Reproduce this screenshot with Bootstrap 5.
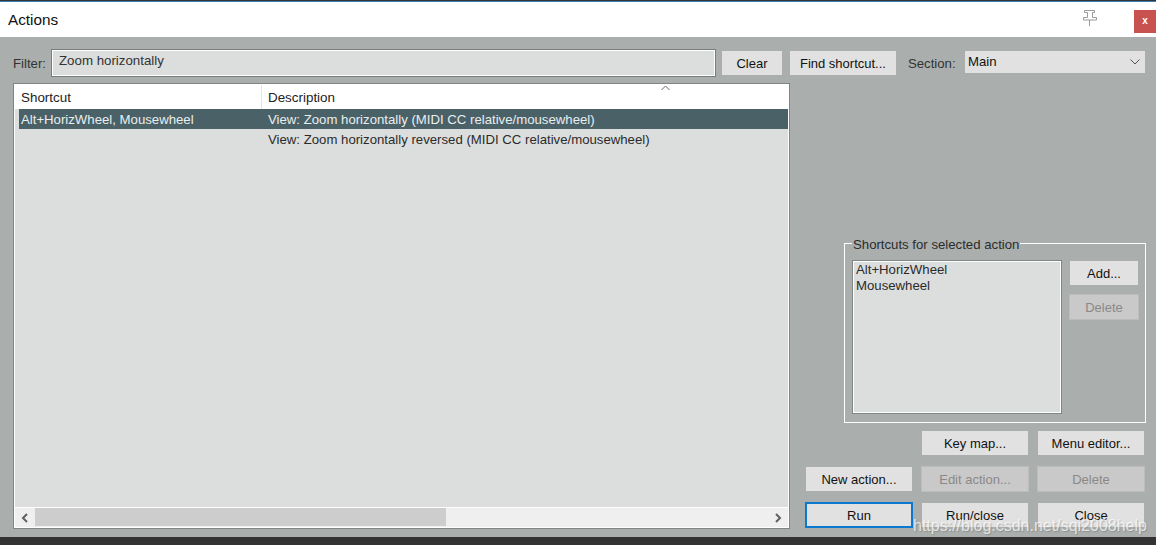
<!doctype html>
<html lang="en"><head><meta charset="utf-8"><title>Actions</title>
<link rel="stylesheet" href="https://cdn.jsdelivr.net/npm/bootstrap@5.3.0/dist/css/bootstrap.min.css">
<style>
html,body{height:100%;}
body{width:1156px;height:545px;overflow:hidden;background:#aaafae;font:13.2px/15px "Liberation Sans",Arial,sans-serif;color:#2b2b2b;position:relative;}
.strip{height:2px;background:linear-gradient(#333 0 1px,#3a80b8 1px);}
.titlebar{height:35px;background:#fff;}
.titletext{font-size:15.3px;line-height:20px;color:#111;padding-left:8px;padding-top:8px;}
.pinicon{width:16px;height:17px;margin:8px 36px 0 0;}
.closebox{width:22px;height:23px;margin-top:8px;background:#c85250;color:#fff;font-weight:700;font-size:10px;line-height:21px;text-align:center;}
.mainarea{height:500px;padding:12px 0 0 13px;}
.bottombar{height:8px;background:#333;}
.filterrow{height:28px;margin-bottom:6px;}
.lbl{color:#333;}
.filterinput.form-control{width:665px;height:28px;margin-left:5px;border:1px solid #777c7d;border-radius:0;box-shadow:inset 0 0 0 1px #fff;background:#dcdedd;font-size:13.3px;line-height:15px;color:#333;padding:3px 7px 8px;}
.wbtn.btn{--bs-btn-border-radius:0;border-radius:0;background:#e1e1e1;border:1px solid #aaafae;color:#111;font-size:13px;line-height:15px;padding:0;height:26px;}
.wbtn.btn:disabled{background:#c9c9c9;border-color:#bcbcbc;color:#8b8888;opacity:1;}
.wbtn.runbtn{border:2px solid #0b78d0;}
.clearb{width:62px;margin-left:5px;}
.findb{width:108px;margin-left:6px;}
.seclbl{margin-left:11px;width:57px;}
.secsel.form-select{width:180px;height:22px;border:0;border-radius:0;background-color:#e1e1e1;font-size:13.2px;line-height:15px;color:#111;padding:0 24px 1px 3px;background-image:url("data:image/svg+xml,%3csvg xmlns='http://www.w3.org/2000/svg' viewBox='0 0 10 6'%3e%3cpath fill='none' stroke='%23555' d='M.5.5 5 5 9.5.5'/%3e%3c/svg%3e");background-position:right 5px center;background-size:10px 6px;margin-top:-3px;}
.listwrap{width:777px;height:446px;border:1px solid #808587;background:#dcdedd;}
.listin{height:100%;border:1px solid #fff;position:relative;}
.listhead{height:24px;background:#fff;color:#222;line-height:25px;font-size:13.4px;}
.cola{width:247px;padding-left:6px;border-right:1px solid #e6e6e6;}
.colb{padding-left:6px;}
.listbody{padding-left:4px;}
.lrow{height:20px;line-height:21px;}
.lrow+.lrow{height:21px;line-height:21px;}
.lrow .cola{width:243px;padding-left:2px;border:0;}
.lrow .colb{padding-left:6px;}
.lsel{background:#4a6168;color:#e9eeee;}
.sortup{position:absolute;left:646px;top:0;width:9px;height:6px;}
.hbar{height:20px;background:#efefef;border-top:1px solid #fff;}
.harrow{width:20px;}
.hthumb{width:411px;background:#cdcdcd;margin-bottom:1px;}
.sidepanel{width:366px;height:446px;padding-bottom:1px;}
.grpbox{width:302px;height:188px;margin:0 0 7px 54px;padding:0 5px 7px 7px;border:1px solid #fff;border-radius:0;min-width:0;}
.grpbox legend{float:none;width:auto;font-size:13.2px;line-height:15px;margin:0;padding:2px 1px 0;color:#2b2b2b;}
.keylist{width:210px;height:154px;flex:none;border:1px solid #808587;box-shadow:inset 0 0 0 1px #fff;background:#dcdedd;padding:1px 3px;line-height:16px;margin-top:8px;}
.addcol{width:70px;flex:none;margin-left:7px;margin-top:8px;}
.addb{width:70px;height:26px;}
.btngrid{display:grid;grid-template-columns:repeat(3,108px);grid-auto-rows:26px;gap:10px 8px;margin-left:15px;}
.wmark{position:absolute;left:913px;top:516px;font-size:16px;line-height:19px;color:rgba(255,255,255,.72);text-shadow:1px 1px 1px rgba(90,90,90,.35);white-space:nowrap;}
</style></head><body>
<div class="strip"></div>
<div class="titlebar d-flex justify-content-between">
  <div class="titletext">Actions</div>
  <div class="d-flex align-items-start">
    <svg class="pinicon" viewBox="0 0 16 17" fill="#fff" stroke="#9a9a9a"><path d="M2.500.5h10v2h-2v5h4v2.500h-13v-2.500h4v-5h-3zM7.500 10v6"/></svg>
    <div class="closebox">x</div>
  </div>
</div>
<div class="mainarea">
  <div class="filterrow d-flex align-items-center">
    <span class="lbl">Filter:</span>
    <input class="filterinput form-control" type="text" value="Zoom horizontally">
    <button class="wbtn btn clearb" type="button">Clear</button>
    <button class="wbtn btn findb" type="button">Find shortcut...</button>
    <span class="lbl seclbl">Section:</span>
    <select class="secsel form-select"><option>Main</option></select>
  </div>
  <div class="d-flex">
    <div class="listwrap">
      <div class="listin d-flex flex-column">
        <div class="listhead d-flex"><div class="cola">Shortcut</div><div class="colb">Description</div></div>
        <svg class="sortup" viewBox="0 0 9 6" fill="none" stroke="#666"><path d="M.5 5 4.500 1l4 4"/></svg>
        <div class="listbody flex-grow-1">
          <div class="lrow lsel d-flex"><div class="cola">Alt+HorizWheel, Mousewheel</div><div class="colb">View: Zoom horizontally (MIDI CC relative/mousewheel)</div></div>
          <div class="lrow d-flex"><div class="cola"></div><div class="colb">View: Zoom horizontally reversed (MIDI CC relative/mousewheel)</div></div>
        </div>
        <div class="hbar d-flex">
          <div class="harrow d-flex align-items-center justify-content-center"><svg width="8" height="10" viewBox="0 0 8 10" fill="none" stroke="#606060" stroke-width="2"><path d="M6 1L2 5l4 4"/></svg></div>
          <div class="hthumb"></div>
          <div class="flex-grow-1"></div>
          <div class="harrow d-flex align-items-center justify-content-center"><svg width="8" height="10" viewBox="0 0 8 10" fill="none" stroke="#606060" stroke-width="2"><path d="M2 1l4 4-4 4"/></svg></div>
        </div>
      </div>
    </div>
    <div class="sidepanel d-flex flex-column justify-content-end">
      <fieldset class="grpbox">
        <legend>Shortcuts for selected action</legend>
        <div class="d-flex">
          <div class="keylist"><div>Alt+HorizWheel</div><div>Mousewheel</div></div>
          <div class="addcol d-flex flex-column gap-2">
            <button class="wbtn btn addb" type="button">Add...</button>
            <button class="wbtn btn addb" type="button" disabled>Delete</button>
          </div>
        </div>
      </fieldset>
      <div class="btngrid">
        <div></div>
        <button class="wbtn btn" type="button">Key map...</button>
        <button class="wbtn btn" type="button">Menu editor...</button>
        <button class="wbtn btn" type="button">New action...</button>
        <button class="wbtn btn" type="button" disabled>Edit action...</button>
        <button class="wbtn btn" type="button" disabled>Delete</button>
        <button class="wbtn btn runbtn" type="button">Run</button>
        <button class="wbtn btn" type="button">Run/close</button>
        <button class="wbtn btn" type="button">Close</button>
      </div>
    </div>
  </div>
</div>
<div class="bottombar"></div>
<div class="wmark">https://blog.csdn.net/sqi2008help</div>
</body></html>
